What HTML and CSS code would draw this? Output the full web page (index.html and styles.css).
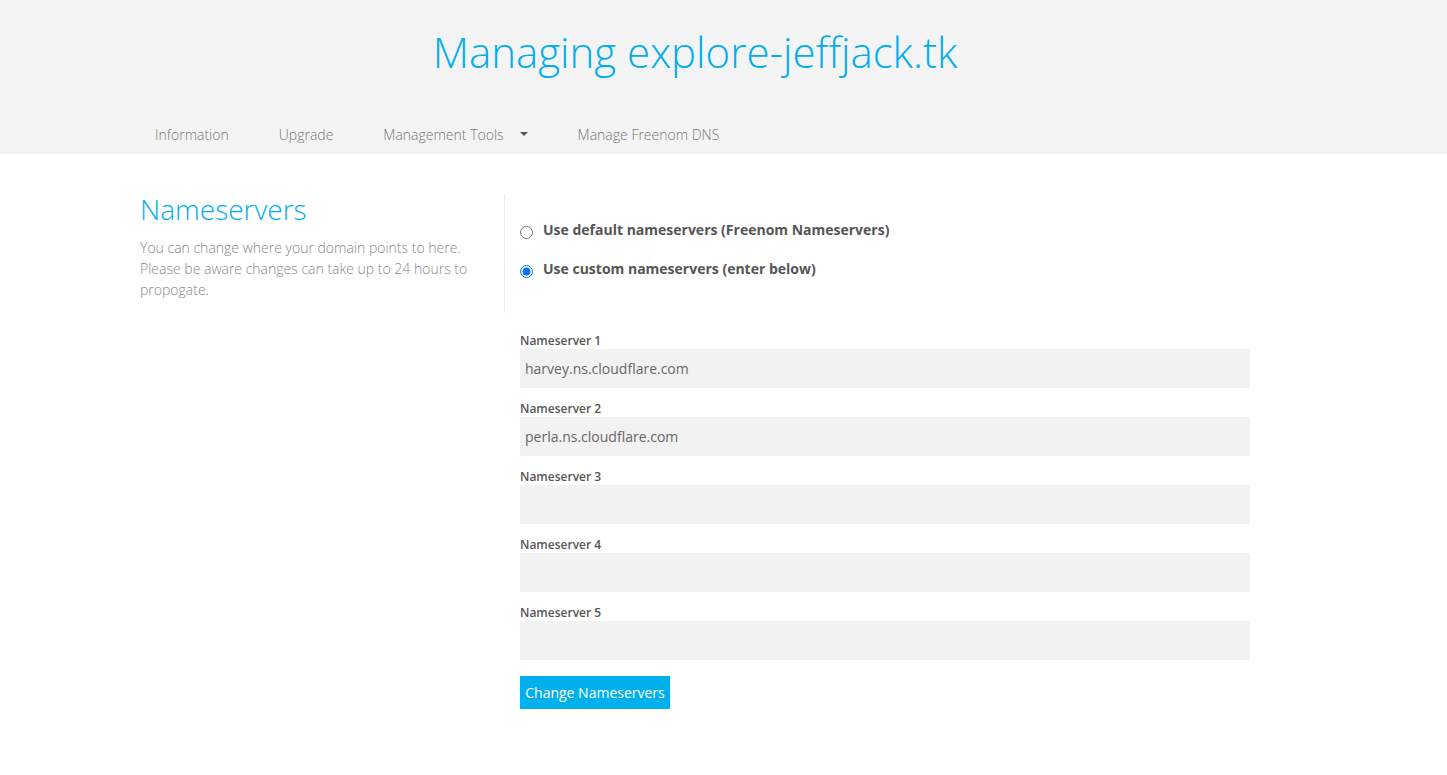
FILE: index.html
```html
<!DOCTYPE html>
<html>
<head>
<meta charset="utf-8">
<link rel="stylesheet" href="styles.css">
</head>
<body>
<header class="header">
  <h1 class="title">Managing explore-jeffjack.tk</h1>
  <nav class="nav">
    <a class="nav-item">Information</a>
    <a class="nav-item">Upgrade</a>
    <a class="nav-item">Management Tools <span class="caret"></span></a>
    <a class="nav-item">Manage Freenom DNS</a>
  </nav>
</header>
<main class="content">
  <section class="intro">
    <h2 class="intro-title">Nameservers</h2>
    <p class="intro-text">You can change where your domain points to here. Please be aware changes can take up to 24 hours to propogate.</p>
  </section>
  <section class="form">
    <div class="choices">
      <label class="choice"><input type="radio" name="ns" class="radio"><span>Use default nameservers (Freenom Nameservers)</span></label>
      <label class="choice"><input type="radio" name="ns" class="radio" checked><span>Use custom nameservers (enter below)</span></label>
    </div>
    <div class="fields">
      <div class="field"><label class="field-label">Nameserver 1</label><input class="field-input" type="text" value="harvey.ns.cloudflare.com"></div>
      <div class="field"><label class="field-label">Nameserver 2</label><input class="field-input" type="text" value="perla.ns.cloudflare.com"></div>
      <div class="field"><label class="field-label">Nameserver 3</label><input class="field-input" type="text" value=""></div>
      <div class="field"><label class="field-label">Nameserver 4</label><input class="field-input" type="text" value=""></div>
      <div class="field"><label class="field-label">Nameserver 5</label><input class="field-input" type="text" value=""></div>
      <button class="submit">Change Nameservers</button>
    </div>
  </section>
</main>
</body>
</html>
```
FILE: styles.css
```css
* { box-sizing: border-box; }
body {
  margin: 0;
  font-family: "Open Sans", "Liberation Sans", sans-serif;
  background: #fff;
  color: #666;
}
.header {
  background: #f4f4f4;
  height: 154px;
  padding-top: 24px;
}
.title {
  margin: 0 0 0 140px;
  width: 1110px;
  text-align: center;
  font-weight: 300;
  font-size: 42px;
  line-height: 56px;
  color: #00aeef;
}
.nav {
  width: 1130px;
  margin: 33px 0 0 130px;
  display: flex;
  height: 42px;
  align-items: center;
}
.nav-item {
  padding: 0 25px;
  font-size: 14px;
  font-weight: 300;
  color: #777;
  display: flex;
  align-items: center;
}
.caret {
  display: inline-block;
  width: 0;
  height: 0;
  margin-left: 16px;
  border-left: 4px solid transparent;
  border-right: 4px solid transparent;
  border-top: 4px solid #555;
}
.content {
  display: flex;
  margin-left: 140px;
  width: 1110px;
  padding-top: 40px;
}
.intro {
  width: 364px;
  flex: none;
  padding-right: 20px;
}
.intro-title {
  margin: -2px 0 0;
  font-size: 28px;
  font-weight: 300;
  color: #00aeef;
  line-height: 34px;
}
.intro-text {
  margin: 11px 0 0;
  font-size: 14px;
  font-weight: 300;
  line-height: 21px;
  color: #888;
}
.form { flex: 1; }
.choices {
  border-left: 1px solid #ececec;
  height: 119px;
  padding: 26px 0 0 15px;
  display: flex;
  flex-direction: column;
  gap: 19px;
}
.choice {
  display: flex;
  align-items: center;
  font-weight: 700;
  font-size: 14px;
  color: #555;
  line-height: 20px;
}
.radio {
  margin: 4px 10px 0 0;
  width: 13px;
  height: 13px;
}
.fields {
  padding: 20px 0 0 16px;
}
.field { margin-top: 13px; }
.field:first-child { margin-top: 0; }
.field-label {
  display: block;
  font-size: 12px;
  font-weight: 600;
  color: #555;
  line-height: 16px;
  margin-bottom: 0;
}
.field-input {
  display: block;
  width: 100%;
  height: 39px;
  border: none;
  background: #f2f2f2;
  padding: 0 5px;
  font-family: "Open Sans", "Liberation Sans", sans-serif;
  font-size: 14px;
  color: #666;
  outline: none;
}
.submit {
  margin-top: 16px;
  height: 33px;
  width: 150px;
  border: none;
  background: #00b0ec;
  color: #fff;
  font-family: "Open Sans", "Liberation Sans", sans-serif;
  font-size: 14px;
  padding: 0;
}
```
